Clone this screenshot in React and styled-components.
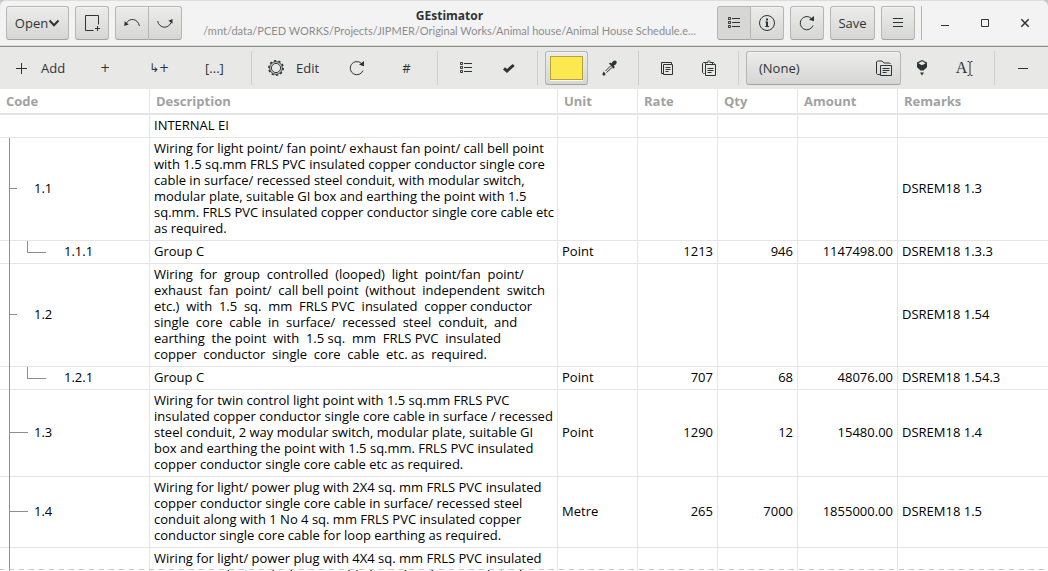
import React from 'react';
import styled, { createGlobalStyle, css } from 'styled-components';

const ink = '#2e3436';
const rule = '#e5e5e5';
const guide = '#8e8e8e';

const GlobalStyle = createGlobalStyle`
  * { box-sizing: border-box; }
  body { margin: 0; background: #fff; }
  button { font: inherit; color: inherit; margin: 0; }
`;

const Window = styled.div`
  display: flex;
  flex-direction: column;
  height: 100vh;
  overflow: hidden;
  color: ${ink};
  font: 13px/16px "Open Sans", "Noto Sans", sans-serif;
`;

/* ---------- header bar ---------- */

const HeaderBackdrop = styled.div`
  background: #c4c4c4;
`;

const HeaderBar = styled.header`
  display: flex;
  align-items: center;
  gap: 6px;
  padding: 6px 3px 6px 6px;
  background: #f3f3f3;
  border-bottom: 1px solid #8b8e88;
  border-radius: 6px 6px 0 0;
  box-shadow: inset 0 1px #dcdcdc, inset 0 -1px #dedede;
`;

const ButtonGroup = styled.div`
  display: flex;

  > button:not(:last-child) {
    width: 34px;
    border-radius: 3px 0 0 3px;
  }
  > button:last-child {
    width: 33px;
    border-left: 0;
    border-radius: 0 3px 3px 0;
  }
`;

const Button = styled.button`
  display: flex;
  flex: none;
  align-items: center;
  justify-content: center;
  width: ${p => p.$width || 34}px;
  height: 34px;
  padding: 0;
  border: 1px solid #b6b6b3;
  border-bottom-color: #a3a39f;
  border-radius: 3px;
  background: ${p => (p.$active ? '#d7d7d6' : 'linear-gradient(#ececeb, #d6d6d4)')};
  box-shadow: ${p => (p.$active ? 'none' : 'inset 0 1px #f4f4f4')};
`;

const Titles = styled.div`
  flex: 1;
  min-width: 0;
  text-align: center;
  white-space: nowrap;
`;

const Title = styled.h1`
  margin: 0;
  font-size: 12px;
  line-height: 16px;
`;

const Subtitle = styled.p`
  margin: 0;
  overflow: hidden;
  text-overflow: ellipsis;
  color: #8b8e8f;
  font: 11px/14px Lato, sans-serif;
`;

const WindowControls = styled.div`
  display: flex;
  padding-left: 3px;
  border-left: 1px solid #b4b4b2;
`;

const FlatButton = styled.button`
  display: flex;
  flex: none;
  align-items: center;
  justify-content: ${p => (p.$start ? 'flex-start' : 'center')};
  gap: 12px;
  width: ${p => p.$width || 42}px;
  height: 34px;
  padding: 0 0 0 ${p => p.$start || 0}px;
  border: 0;
  background: none;
`;

/* ---------- tool bar ---------- */

const Toolbar = styled.div`
  display: flex;
  align-items: center;
  padding: 4px 0;
  background: #e8e8e7;
`;

const ToolDivider = styled.span`
  flex: none;
  width: 1px;
  height: 34px;
  margin: 0 7px 0 8px;
  background: #cfcfcd;
`;

const Swatch = styled.span`
  width: 33px;
  height: 24px;
  border: 1px solid #b5a33a;
  background: #fce94f;
  box-shadow: 0 1px #f8f8f8;
`;

const Chooser = styled(Button)`
  justify-content: space-between;
  padding: 0 8px 0 12px;
`;

const Symbol = styled.span`
  font: 12px/16px "DejaVu Sans", sans-serif;
`;

const Letter = styled.span`
  font: 16px/16px "Liberation Serif", serif;
`;

const TextCursor = styled(FlatButton)`
  gap: 0;
`;

/* ---------- schedule ---------- */

const Viewport = styled.main`
  position: relative;
  flex: 1;
  min-height: 0;
  overflow: hidden;

  &::after {
    content: "";
    position: absolute;
    inset: auto 0 1px 0;
    height: 1px;
    background: repeating-linear-gradient(90deg, #c6c6c6 0 4px, #fff 4px 9px, #c6c6c6 9px 10px);
  }
`;

const Table = styled.table`
  width: 100%;
  border-spacing: 0;
  table-layout: fixed;
  color: #000;
`;

const Column = styled.col`
  width: ${p => (p.$width ? `${p.$width}px` : 'auto')};
`;

const HeadCell = styled.th`
  height: 26px;
  padding: 0 6px;
  border-right: 1px solid ${rule};
  border-bottom: 2px solid ${rule};
  color: #a0a2a2;
  text-align: left;

  &:last-child { border-right: 0; }
`;

const Cell = styled.td`
  padding: 2px 4px 4px;
  border-right: 1px solid ${rule};
  border-bottom: 1px solid ${rule};
  text-align: ${p => (p.$number ? 'right' : 'left')};
  white-space: pre;

  &:last-child { border-right: 0; }
`;

const line = (x, y, w, h) =>
  `linear-gradient(${guide}, ${guide}) ${x}px ${y} / ${w} ${h} no-repeat border-box`;

const trunk = line(9, '0', '1px', '100%');
const middle = 'calc(50% - 1px)';

const branches = {
  root: '',
  pass: `${trunk},`,
  open: `${trunk}, ${line(9, middle, '8px', '1px')},`,
  leaf: `${trunk}, ${line(9, middle, '19px', '1px')},`,
  child: `${trunk}, ${line(27, '0', '1px', '50%')}, ${line(27, '50%', '19px', '1px')},`,
};

const CodeCell = styled(Cell)`
  padding: 2px 4px 5px ${p => (p.$branch === 'child' ? 64 : 34)}px;
  border-bottom: 0;
  ${p => css`
    background: ${branches[p.$branch]}
      linear-gradient(${rule}, ${rule}) 0 100% / 100% 1px no-repeat;
  `}
`;

/* ---------- icons ---------- */

const Icon = ({ children, size = 16, fill = 'none', stroke = ink, width = 1 }) => (
  <svg width={size} height={size} viewBox={`0 0 ${size} ${size}`} fill={fill} stroke={stroke} strokeWidth={width} aria-hidden="true">
    {children}
  </svg>
);

const ChevronIcon = () => (
  <Icon size={12} width={2}><path d="M1.5 3.5 6 8.2 10.5 3.5" /></Icon>
);
const NewIcon = () => (
  <Icon><path d="M9.5 15.5h-8V.5h13v9M13.5 11v5M11 13.5h5" /></Icon>
);
const UndoIcon = () => (
  <Icon>
    <path d="M15.4 11C14 3.2 5 2.4 2.2 8.6" />
    <path d="M.6 6.2.3 11l4.4-1.6z" fill={ink} stroke="none" />
  </Icon>
);
const RedoIcon = () => (
  <Icon>
    <path d="M.6 6c1.6 7.6 10.4 8.2 13.4 1.8" />
    <path d="M15.6 4 11.4 5.8l4 3z" fill={ink} stroke="none" />
  </Icon>
);
const ListIcon = () => (
  <Icon>
    <path d="M2.5 2.5h2v2h-2zM2.5 6.5h2v2h-2zM2.5 10.5h2v2h-2zM6 3.5h8M6 7.5h8M6 11.5h8" />
  </Icon>
);
const InfoIcon = () => (
  <Icon>
    <circle cx="8" cy="8" r="7.5" />
    <path d="M7 3.5h2v2H7zM6.3 6.5H9V11h1v1H6.3v-1H7V7.5h-.7z" fill={ink} stroke="none" />
  </Icon>
);
const ReloadIcon = () => (
  <Icon>
    <path d="M12.2 3.2A6.6 6.6 0 1 0 14 10.5" />
    <path d="M15 1v5.200L10 4.800z" fill={ink} stroke="none" />
  </Icon>
);
const MenuIcon = () => (
  <Icon><path d="M3 3.5h10M3 7.5h10M3 11.5h10" /></Icon>
);
const MinimizeIcon = () => (
  <Icon><path d="M4 10.5h8" /></Icon>
);
const MaximizeIcon = () => (
  <Icon><path d="M4.5 4.5h7v7h-7z" /></Icon>
);
const CloseIcon = () => (
  <Icon width={1.5}><path d="m4.3 4.3 7.4 7.4M11.7 4.3l-7.4 7.4" /></Icon>
);
const PlusIcon = () => (
  <Icon><path d="M8.5 3v11M3 8.5h11" /></Icon>
);
const MinusIcon = () => (
  <Icon><path d="M3 8.5h10" /></Icon>
);
const GearIcon = () => (
  <Icon>
    <circle cx="8" cy="8" r="6.3" />
    <circle cx="8" cy="8" r="4.6" />
    <circle cx="8" cy="8" r="7.2" strokeWidth="1.5" strokeDasharray="2.26 2.264" />
  </Icon>
);
const CheckIcon = () => (
  <Icon width={3}><path d="M4 8.4 7 11 13.7 5" /></Icon>
);
const DropperIcon = () => (
  <Icon>
    <path d="M9.5 6 4.5 11M11 7.5 5.5 12.5" />
    <path d="M8 3.6 9.2 2.6 10.6 3.600C11.600.600 14 -.200 15.200 1c1.200 1.300 0 3.600-2.400 4.600l.9 1.900-1.200 1.200zM2.600 11.400c1.300 1.200 2 2.200 1.800 3.200-.2 1.300-2.600 1.500-2.900 0-.2-1 .4-1.600 1.100-3.200z" fill={ink} stroke="none" />
  </Icon>
);
const CopyIcon = () => (
  <Icon>
    <path d="M4 13.5H2.500v-11h10V4M4.500 4.500h9v10h-9zM6.500 7.500h5M6.500 9.500h5M6.500 11.500h3" />
  </Icon>
);
const PasteIcon = () => (
  <Icon>
    <path d="M3.5 13.5h-1l-1-1v-9l1-1h2M11.5 2.5h1l1 1M4.5 15.5v-11h10v11zM6.5 8.5h6M6.5 10.5h6M6.5 12.5h4" />
    <path d="M4.5 4V2.5H7v-1l1-1 1 1v1h2.5V4" />
  </Icon>
);
const FolderIcon = () => (
  <Icon>
    <path d="M4 14.5H1.5l-1-1V2l1-1H6l2 2h5.5l1 1M4.5 5.5h11v10h-11zM6.5 8.5h7M6.5 10.5h7M6.5 12.5h4" />
  </Icon>
);
const FillIcon = () => (
  <Icon>
    <path d="M8 0l5 2.6v4.6L9.5 10.5h-3L3 7.2V2.6zM6 12.5h4L8 15.5z" fill={ink} stroke="none" />
    <path d="M8 1.2l3.6 2L8 5.200 4.400 3.200z" fill="#e8e8e7" stroke="none" />
  </Icon>
);
const BeamIcon = () => (
  <svg width="6" height="15" viewBox="0 0 6 15" fill="none" stroke={ink} aria-hidden="true">
    <path d="M.5.5H2l1 1 1-1h1.5M3 1v13M.5 14.5H2l1-1 1 1h1.5" />
  </svg>
);

/* ---------- data ---------- */

const columns = [
  ['Code', 150],
  ['Description', 408],
  ['Unit', 80],
  ['Rate', 80],
  ['Qty', 80],
  ['Amount', 100],
  ['Remarks', 0],
];

const rows = [
  { branch: 'root', code: '', text: 'INTERNAL EI' },
  {
    branch: 'open',
    code: '1.1',
    text: `Wiring for light point/ fan point/ exhaust fan point/ call bell point
with 1.5 sq.mm FRLS PVC insulated copper conductor single core
cable in surface/ recessed steel conduit, with modular switch,
modular plate, suitable GI box and earthing the point with 1.5
sq.mm. FRLS PVC insulated copper conductor single core cable etc
as required.`,
    remarks: 'DSREM18 1.3',
  },
  { branch: 'child', code: '1.1.1', text: 'Group C', unit: 'Point', rate: '1213', qty: '946', amount: '1147498.00', remarks: 'DSREM18 1.3.3' },
  {
    branch: 'open',
    code: '1.2',
    text: `Wiring  for  group  controlled  (looped)  light  point/fan  point/
exhaust  fan  point/  call bell point  (without  independent  switch
etc.)  with  1.5  sq.  mm  FRLS PVC  insulated  copper conductor
single  core  cable  in  surface/  recessed  steel  conduit,  and
earthing  the point  with  1.5 sq.  mm  FRLS PVC  insulated
copper  conductor  single  core  cable  etc. as  required.`,
    remarks: 'DSREM18 1.54',
  },
  { branch: 'child', code: '1.2.1', text: 'Group C', unit: 'Point', rate: '707', qty: '68', amount: '48076.00', remarks: 'DSREM18 1.54.3' },
  {
    branch: 'leaf',
    code: '1.3',
    text: `Wiring for twin control light point with 1.5 sq.mm FRLS PVC
insulated copper conductor single core cable in surface / recessed
steel conduit, 2 way modular switch, modular plate, suitable GI
box and earthing the point with 1.5 sq.mm. FRLS PVC insulated
copper conductor single core cable etc as required.`,
    unit: 'Point', rate: '1290', qty: '12', amount: '15480.00', remarks: 'DSREM18 1.4',
  },
  {
    branch: 'leaf',
    code: '1.4',
    text: `Wiring for light/ power plug with 2X4 sq. mm FRLS PVC insulated
copper conductor single core cable in surface/ recessed steel
conduit along with 1 No 4 sq. mm FRLS PVC insulated copper
conductor single core cable for loop earthing as required.`,
    unit: 'Metre', rate: '265', qty: '7000', amount: '1855000.00', remarks: 'DSREM18 1.5',
  },
  {
    branch: 'pass',
    code: '',
    text: `Wiring for light/ power plug with 4X4 sq. mm FRLS PVC insulated
copper conductor single core cable in surface/ recessed steel`,
  },
];

export default function App() {
  return (
    <Window>
      <GlobalStyle />
      <HeaderBackdrop>
        <HeaderBar>
          <Button $width={63}>Open<ChevronIcon /></Button>
          <Button aria-label="New"><NewIcon /></Button>
          <ButtonGroup>
            <Button aria-label="Undo"><UndoIcon /></Button>
            <Button aria-label="Redo"><RedoIcon /></Button>
          </ButtonGroup>
          <Titles>
            <Title>GEstimator</Title>
            <Subtitle>/mnt/data/PCED WORKS/Projects/JIPMER/Original Works/Animal house/Animal House Schedule.e...</Subtitle>
          </Titles>
          <ButtonGroup>
            <Button $active aria-label="Schedule view"><ListIcon /></Button>
            <Button aria-label="Information"><InfoIcon /></Button>
          </ButtonGroup>
          <Button aria-label="Refresh"><ReloadIcon /></Button>
          <Button $width={45}>Save</Button>
          <Button aria-label="Menu"><MenuIcon /></Button>
          <WindowControls>
            <FlatButton $width={40} aria-label="Minimize"><MinimizeIcon /></FlatButton>
            <FlatButton $width={40} aria-label="Maximize"><MaximizeIcon /></FlatButton>
            <FlatButton $width={40} aria-label="Close"><CloseIcon /></FlatButton>
          </WindowControls>
        </HeaderBar>
      </HeaderBackdrop>

      <Toolbar role="toolbar">
        <FlatButton $width={78} $start={13}><PlusIcon />Add</FlatButton>
        <FlatButton $width={54}><Symbol>+</Symbol></FlatButton>
        <FlatButton $width={54}><Symbol>↳+</Symbol></FlatButton>
        <FlatButton $width={57}>[...]</FlatButton>
        <ToolDivider />
        <FlatButton $width={71} $start={9}><GearIcon />Edit</FlatButton>
        <FlatButton $width={54} aria-label="Recalculate"><ReloadIcon /></FlatButton>
        <FlatButton $width={45}>#</FlatButton>
        <ToolDivider />
        <FlatButton aria-label="List"><ListIcon /></FlatButton>
        <FlatButton aria-label="Mark"><CheckIcon /></FlatButton>
        <ToolDivider />
        <Button $width={43} aria-label="Colour"><Swatch /></Button>
        <FlatButton aria-label="Pick colour"><DropperIcon /></FlatButton>
        <ToolDivider />
        <FlatButton aria-label="Copy"><CopyIcon /></FlatButton>
        <FlatButton aria-label="Paste"><PasteIcon /></FlatButton>
        <ToolDivider />
        <Chooser $width={155}>(None)<FolderIcon /></Chooser>
        <FlatButton aria-label="Fill"><FillIcon /></FlatButton>
        <TextCursor $width={43} aria-label="Rename"><Letter>A</Letter><BeamIcon /></TextCursor>
        <ToolDivider />
        <FlatButton aria-label="Remove"><MinusIcon /></FlatButton>
      </Toolbar>

      <Viewport>
        <Table>
          <colgroup>
            {columns.map(([name, width]) => <Column key={name} $width={width} />)}
          </colgroup>
          <thead>
            <tr>{columns.map(([name]) => <HeadCell key={name} scope="col">{name}</HeadCell>)}</tr>
          </thead>
          <tbody>
            {rows.map((row, i) => (
              <tr key={i}>
                <CodeCell $branch={row.branch}>{row.code}</CodeCell>
                <Cell>{row.text}</Cell>
                <Cell>{row.unit}</Cell>
                <Cell $number>{row.rate}</Cell>
                <Cell $number>{row.qty}</Cell>
                <Cell $number>{row.amount}</Cell>
                <Cell>{row.remarks}</Cell>
              </tr>
            ))}
          </tbody>
        </Table>
      </Viewport>
    </Window>
  );
}
